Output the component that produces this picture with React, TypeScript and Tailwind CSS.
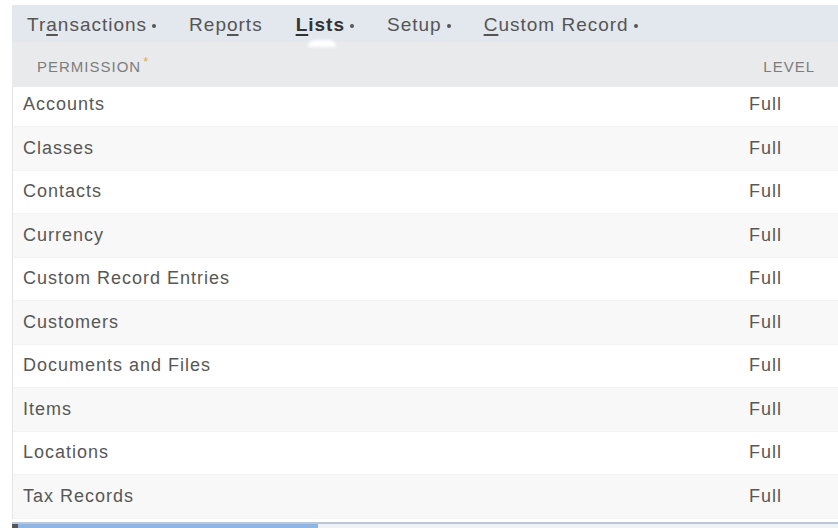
const tabs = [
  { pre: 'Tr', key: 'a', post: 'nsactions', dot: true },
  { pre: 'Rep', key: 'o', post: 'rts', dot: false },
  { pre: '', key: 'L', post: 'ists', dot: true, active: true },
  { pre: 'Setup', key: '', post: '', dot: true },
  { pre: '', key: 'C', post: 'ustom Record', dot: true },
]

const permissions = [
  'Accounts',
  'Classes',
  'Contacts',
  'Currency',
  'Custom Record Entries',
  'Customers',
  'Documents and Files',
  'Items',
  'Locations',
  'Tax Records',
]

export default function App() {
  return (
    <div
      className="w-[838px] h-[528px] overflow-hidden bg-white pt-[5px] pl-[12px]"
      style={{ fontFamily: '"Liberation Sans", Arial, sans-serif' }}
    >
      <div className="relative z-20 h-[37px] bg-[#e3e7ee] flex items-center gap-[33px] pl-[15px] pt-[4px] text-[19px] tracking-[1px] text-[#555]">
        {tabs.map((t, i) => (
          <div key={i} className={`relative flex items-center ${t.active ? 'font-bold text-[#333]' : ''}`}>
            <span>
              {t.pre}
              {t.key && <span className="underline underline-offset-[3px] decoration-[1.5px]">{t.key}</span>}
              {t.post}
            </span>
            {t.dot && <span className="ml-[5px] w-[4px] h-[4px] rounded-full bg-[#555]" />}
            {t.active && (
              <span className="absolute left-[12px] top-[29px] w-[28px] h-[7px] rounded-t-full bg-white blur-[1.5px]" />
            )}
          </div>
        ))}
      </div>
      <div className="relative z-10 h-[45px] bg-[#e9eaec] flex items-center justify-between pl-[25px] pr-[23px] pt-[5px] text-[15px] tracking-[1px] text-[#7d7d7d]">
        <span className="relative">
          PERMISSION
          <span className="absolute -right-[8px] -top-[3px] text-[#e8a23a] text-[12px]">*</span>
        </span>
        <span>LEVEL</span>
      </div>
      <div className="-mt-[3.5px] border-l border-[#e4e4e4] text-[18px] tracking-[1px] text-[#575757]">
        {permissions.map((p, i) => (
          <div
            key={p}
            className={`h-[43.5px] flex items-center border-b border-[#f3f3f3] ${i % 2 ? 'bg-[#f8f8f8]' : 'bg-white'}`}
          >
            <span className="pl-[10px] w-[736px]">{p}</span>
            <span>Full</span>
          </div>
        ))}
      </div>
      <div className="mt-[3px] border-t-2 border-[#b9c7d8] flex h-[10px]">
        <div className="w-[6px] bg-[#555]" />
        <div className="w-[300px] bg-[#8fb6e3]" />
        <div className="flex-1 bg-[#eef2f7]" />
      </div>
    </div>
  )
}
